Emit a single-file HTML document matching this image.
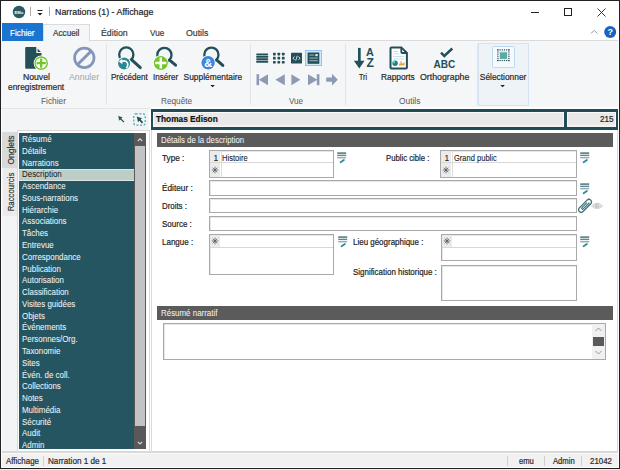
<!DOCTYPE html>
<html><head><meta charset="utf-8"><style>
html,body{margin:0;padding:0;}
body{width:620px;height:470px;overflow:hidden;position:relative;background:#fff;font-family:'Liberation Sans', sans-serif;}
</style></head><body>
<svg style="position:absolute;left:12px;top:5px;" width="14" height="14" viewBox="0 0 14 14"><circle cx="7" cy="7" r="6.2" fill="#2b5a62"/><text x="7" y="8.6" font-family="Liberation Sans" font-size="4.2" fill="#fff" text-anchor="middle" font-weight="bold">EMu</text></svg>
<div style="position:absolute;left:30.2px;top:7.3px;width:1.00px;height:8.30px;background:#ababab"></div>
<svg style="position:absolute;left:36px;top:8px;" width="8" height="9" viewBox="0 0 8 9"><rect x="1.5" y="2" width="5" height="1" fill="#222"/><path d="M1.5 5 L6.5 5 L4 7.5 Z" fill="#222"/></svg>
<div style="position:absolute;left:48.5px;top:7.3px;width:1.00px;height:8.30px;background:#ababab"></div>
<div style="position:absolute;left:55.30px;top:8px;font:normal 8.7px/1 'Liberation Sans', sans-serif;color:#1e1e1e;white-space:pre;letter-spacing:0px;transform:scaleX(1.0198);transform-origin:0 0;-webkit-text-stroke:0.2px #1e1e1e;">Narrations (1) - Affichage</div>
<div style="position:absolute;left:530.5px;top:11.5px;width:8.00px;height:1.00px;background:#222"></div>
<div style="position:absolute;left:563.5px;top:8px;width:8.10px;height:7.80px;border:1px solid #222;box-sizing:border-box"></div>
<svg style="position:absolute;left:597px;top:8px;" width="9" height="9" viewBox="0 0 9 9"><path d="M0.5 0.5 L8.5 8.5 M8.5 0.5 L0.5 8.5" stroke="#2a2a2a" stroke-width="0.95"/></svg>
<div style="position:absolute;left:2px;top:23.3px;width:41.00px;height:17.70px;background:#1b74cf"></div>
<div style="position:absolute;left:9.70px;top:29px;font:normal 8.9px/1 'Liberation Sans', sans-serif;color:#fff;white-space:pre;letter-spacing:0px;transform:scaleX(0.9222);transform-origin:0 0;-webkit-text-stroke:0.2px #fff;">Fichier</div>
<div style="position:absolute;left:90px;top:40px;width:528.00px;height:1.00px;background:#dadbdc"></div>
<div style="position:absolute;left:42.6px;top:23.6px;width:47.40px;height:17.40px;background:#f5f6f7;border:1px solid #dadbdc;border-bottom:none;box-sizing:border-box"></div>
<div style="position:absolute;left:52.90px;top:29px;font:normal 8.9px/1 'Liberation Sans', sans-serif;color:#3a3a3a;white-space:pre;letter-spacing:0px;transform:scaleX(0.9241);transform-origin:0 0;-webkit-text-stroke:0.2px #3a3a3a;">Accueil</div>
<div style="position:absolute;left:101.00px;top:29px;font:normal 8.9px/1 'Liberation Sans', sans-serif;color:#3a3a3a;white-space:pre;letter-spacing:0px;transform:scaleX(0.9852);transform-origin:0 0;-webkit-text-stroke:0.2px #3a3a3a;">Édition</div>
<div style="position:absolute;left:149.70px;top:29px;font:normal 8.9px/1 'Liberation Sans', sans-serif;color:#3a3a3a;white-space:pre;letter-spacing:0px;transform:scaleX(0.9188);transform-origin:0 0;-webkit-text-stroke:0.2px #3a3a3a;">Vue</div>
<div style="position:absolute;left:186.00px;top:29px;font:normal 8.9px/1 'Liberation Sans', sans-serif;color:#3a3a3a;white-space:pre;letter-spacing:0px;transform:scaleX(0.9870);transform-origin:0 0;-webkit-text-stroke:0.2px #3a3a3a;">Outils</div>
<svg style="position:absolute;left:590px;top:29px;" width="9" height="6" viewBox="0 0 9 6"><path d="M1 4.5 L4.2 1.3 L7.4 4.5" stroke="#9a9a9a" stroke-width="1" fill="none"/></svg>
<svg style="position:absolute;left:603px;top:24.5px;" width="15" height="15" viewBox="0 0 15 15"><circle cx="7.2" cy="7" r="6" fill="#1565c0"/><text x="7.2" y="10.3" font-family="Liberation Sans" font-size="9" font-weight="bold" fill="#fff" text-anchor="middle">?</text></svg>
<div style="position:absolute;left:1px;top:41px;width:617.00px;height:67.00px;background:#f5f6f7"></div>
<div style="position:absolute;left:1px;top:107.6px;width:150.00px;height:1.40px;background:#f3f4f6"></div>
<div style="position:absolute;left:1px;top:107.6px;width:150.00px;height:1.00px;background:#e4e5e7"></div>
<div style="position:absolute;left:151px;top:106.9px;width:467.00px;height:2.10px;background:#fdfdfd"></div>
<div style="position:absolute;left:105.5px;top:44px;width:1.00px;height:61.00px;background:#e1e3e6"></div>
<div style="position:absolute;left:249.5px;top:44px;width:1.00px;height:61.00px;background:#e1e3e6"></div>
<div style="position:absolute;left:345px;top:44px;width:1.00px;height:61.00px;background:#e1e3e6"></div>
<div style="position:absolute;left:476.5px;top:44px;width:1.00px;height:61.00px;background:#e1e3e6"></div>
<div style="position:absolute;left:41.00px;top:97px;font:normal 8.4px/1 'Liberation Sans', sans-serif;color:#5e5e5e;white-space:pre;letter-spacing:0px;transform:scaleX(0.9920);transform-origin:0 0;-webkit-text-stroke:0.05px #5e5e5e;">Fichier</div>
<div style="position:absolute;left:161.00px;top:97px;font:normal 8.4px/1 'Liberation Sans', sans-serif;color:#5e5e5e;white-space:pre;letter-spacing:0px;transform:scaleX(0.9844);transform-origin:0 0;-webkit-text-stroke:0.05px #5e5e5e;">Requête</div>
<div style="position:absolute;left:289.20px;top:97px;font:normal 8.4px/1 'Liberation Sans', sans-serif;color:#5e5e5e;white-space:pre;letter-spacing:0px;transform:scaleX(0.9667);transform-origin:0 0;-webkit-text-stroke:0.05px #5e5e5e;">Vue</div>
<div style="position:absolute;left:399.00px;top:97px;font:normal 8.4px/1 'Liberation Sans', sans-serif;color:#5e5e5e;white-space:pre;letter-spacing:0px;-webkit-text-stroke:0.05px #5e5e5e;">Outils</div>
<div style="position:absolute;left:23.00px;top:73px;font:normal 8.4px/1 'Liberation Sans', sans-serif;color:#2a2a2a;white-space:pre;letter-spacing:0px;transform:scaleX(1.0308);transform-origin:0 0;-webkit-text-stroke:0.2px #2a2a2a;">Nouvel</div>
<div style="position:absolute;left:8.00px;top:83px;font:normal 8.4px/1 'Liberation Sans', sans-serif;color:#2a2a2a;white-space:pre;letter-spacing:0px;transform:scaleX(1.0054);transform-origin:0 0;-webkit-text-stroke:0.2px #2a2a2a;">enregistrement</div>
<div style="position:absolute;left:68.70px;top:73px;font:normal 8.4px/1 'Liberation Sans', sans-serif;color:#a8a8a8;white-space:pre;letter-spacing:0px;transform:scaleX(1.0414);transform-origin:0 0;-webkit-text-stroke:0.05px #a8a8a8;">Annuler</div>
<div style="position:absolute;left:111.20px;top:73px;font:normal 8.4px/1 'Liberation Sans', sans-serif;color:#2a2a2a;white-space:pre;letter-spacing:0px;transform:scaleX(0.9605);transform-origin:0 0;-webkit-text-stroke:0.2px #2a2a2a;">Précédent</div>
<div style="position:absolute;left:152.90px;top:73px;font:normal 8.4px/1 'Liberation Sans', sans-serif;color:#2a2a2a;white-space:pre;letter-spacing:0px;transform:scaleX(0.9654);transform-origin:0 0;-webkit-text-stroke:0.2px #2a2a2a;">Insérer</div>
<div style="position:absolute;left:183.60px;top:73px;font:normal 8.4px/1 'Liberation Sans', sans-serif;color:#2a2a2a;white-space:pre;letter-spacing:0px;-webkit-text-stroke:0.2px #2a2a2a;">Supplémentaire</div>
<div style="position:absolute;left:359.00px;top:73px;font:normal 8.4px/1 'Liberation Sans', sans-serif;color:#2a2a2a;white-space:pre;letter-spacing:0px;transform:scaleX(0.8400);transform-origin:0 0;-webkit-text-stroke:0.2px #2a2a2a;">Tri</div>
<div style="position:absolute;left:381.00px;top:73px;font:normal 8.4px/1 'Liberation Sans', sans-serif;color:#2a2a2a;white-space:pre;letter-spacing:0px;transform:scaleX(0.9941);transform-origin:0 0;-webkit-text-stroke:0.2px #2a2a2a;">Rapports</div>
<div style="position:absolute;left:419.90px;top:73px;font:normal 8.4px/1 'Liberation Sans', sans-serif;color:#2a2a2a;white-space:pre;letter-spacing:0px;transform:scaleX(1.0489);transform-origin:0 0;-webkit-text-stroke:0.2px #2a2a2a;">Orthographe</div>
<div style="position:absolute;left:478.2px;top:42.7px;width:50.80px;height:63.70px;background:#eef3f8;border:1px solid #d3e4f5;box-sizing:border-box"></div>
<div style="position:absolute;left:492px;top:46.1px;width:22.80px;height:22.40px;background:#f7fafd;border:1.4px solid #bcd8f5;border-radius:1.5px;box-sizing:border-box"></div>
<div style="position:absolute;left:479.80px;top:73px;font:normal 8.4px/1 'Liberation Sans', sans-serif;color:#2a2a2a;white-space:pre;letter-spacing:0px;-webkit-text-stroke:0.2px #2a2a2a;">Sélectionner</div>
<svg style="position:absolute;left:209px;top:84px;" width="8" height="5" viewBox="0 0 8 5"><path d="M1.3 0.9 L5.9 0.9 L3.6 3.3 Z" fill="#222"/></svg>
<svg style="position:absolute;left:499px;top:84px;" width="8" height="5" viewBox="0 0 8 5"><path d="M1.3 0.9 L5.9 0.9 L3.6 3.3 Z" fill="#222"/></svg>
<svg style="position:absolute;left:0;top:0" width="620" height="470" viewBox="0 0 620 470"><path d="M26.2 47 H36.3 V53 H41.5 V67.7 a1 1 0 0 1 -1 1 H26.2 a1 1 0 0 1 -1 -1 V48 a1 1 0 0 1 1 -1 Z" fill="#234f58"/><path d="M37.6 48.6 L40.9 52 H37.6 Z" fill="#234f58"/><circle cx="41.2" cy="63.1" r="7.6" fill="#fff"/><circle cx="41.2" cy="63.1" r="6.1" fill="#fff" stroke="#72c62a" stroke-width="1.4"/><path d="M41.2 58.5 V67.7 M36.6 63.1 H45.8" stroke="#72c62a" stroke-width="2.3"/></svg>
<svg style="position:absolute;left:0;top:0" width="620" height="470" viewBox="0 0 620 470"><circle cx="84.3" cy="57.9" r="9.7" fill="none" stroke="#8396ba" stroke-width="2.7"/><path d="M77.4 64.8 L91.2 51" stroke="#8396ba" stroke-width="3"/></svg>
<svg style="position:absolute;left:0;top:0" width="620" height="470" viewBox="0 0 620 470"><circle cx="126.3" cy="54.5" r="7.1" fill="none" stroke="#234f58" stroke-width="2.3"/><path d="M131.5 59.7 L140.3 67.6" stroke="#234f58" stroke-width="3" stroke-linecap="round"/><circle cx="124.1" cy="63.5" r="6.9" fill="#fff"/><circle cx="124.1" cy="63.5" r="6" fill="#2a8a92"/><path d="M121 61.6 Q126 59.6 127.6 63.2 Q128.4 66 126.2 68" stroke="#fff" stroke-width="1.6" fill="none"/><path d="M118.8 61.6 L122.2 58.8 L122.4 64.2 Z" fill="#fff"/></svg>
<svg style="position:absolute;left:0;top:0" width="620" height="470" viewBox="0 0 620 470"><circle cx="164.4" cy="54.9" r="7.1" fill="none" stroke="#234f58" stroke-width="2.3"/><path d="M169.6 60.1 L175.6 65.2" stroke="#234f58" stroke-width="3" stroke-linecap="round"/><circle cx="160.8" cy="63.1" r="7.8" fill="#fff"/><circle cx="160.8" cy="63.1" r="7" fill="#72c62a"/><path d="M160.8 57.6 V68.6 M155.3 63.1 H166.3" stroke="#fff" stroke-width="2.5"/></svg>
<svg style="position:absolute;left:0;top:0" width="620" height="470" viewBox="0 0 620 470"><circle cx="211.4" cy="54.7" r="7.1" fill="none" stroke="#234f58" stroke-width="2.3"/><path d="M216.6 59.900000000000006 L222.8 65.4" stroke="#234f58" stroke-width="3" stroke-linecap="round"/><circle cx="208.1" cy="62.8" r="7.6" fill="#fff"/><circle cx="208.1" cy="62.8" r="6.7" fill="#3b86de"/><text x="208.3" y="66.6" font-family="Liberation Sans" font-size="11" font-weight="bold" fill="#fff" text-anchor="middle">&amp;</text></svg>
<svg style="position:absolute;left:0;top:0" width="620" height="470" viewBox="0 0 620 470"><rect x="256.3" y="53.40" width="11.8" height="1.9" rx="0.5" fill="#234f58"/><rect x="256.3" y="55.85" width="11.8" height="1.9" rx="0.5" fill="#234f58"/><rect x="256.3" y="58.30" width="11.8" height="1.9" rx="0.5" fill="#234f58"/><rect x="256.3" y="60.75" width="11.8" height="1.9" rx="0.5" fill="#234f58"/><rect x="273.00" y="52.70" width="2.7" height="2.7" rx="0.6" fill="#234f58"/><rect x="273.00" y="56.80" width="2.7" height="2.7" rx="0.6" fill="#234f58"/><rect x="273.00" y="60.90" width="2.7" height="2.7" rx="0.6" fill="#234f58"/><rect x="277.45" y="52.70" width="2.7" height="2.7" rx="0.6" fill="#234f58"/><rect x="277.45" y="56.80" width="2.7" height="2.7" rx="0.6" fill="#234f58"/><rect x="277.45" y="60.90" width="2.7" height="2.7" rx="0.6" fill="#234f58"/><rect x="281.90" y="52.70" width="2.7" height="2.7" rx="0.6" fill="#234f58"/><rect x="281.90" y="56.80" width="2.7" height="2.7" rx="0.6" fill="#234f58"/><rect x="281.90" y="60.90" width="2.7" height="2.7" rx="0.6" fill="#234f58"/><rect x="291" y="52.7" width="11" height="10.9" rx="0.6" fill="#234f58"/><path d="M294.4 56.5 L293 58.2 L294.4 59.9 M298.6 56.5 L300 58.2 L298.6 59.9 M297.3 55.8 L295.7 60.6" stroke="#fff" stroke-width="0.8" fill="none"/></svg>
<div style="position:absolute;left:305.4px;top:50px;width:16.70px;height:16.00px;background:#d2e7f9;border:1px solid #90c3ef;box-sizing:border-box"></div>
<svg style="position:absolute;left:0;top:0" width="620" height="470" viewBox="0 0 620 470"><rect x="307.6" y="52.5" width="11.7" height="11.3" fill="#234f58"/><rect x="309.4" y="54.6" width="4.8" height="0.9" fill="#a9c6cf"/><rect x="315.2" y="54" width="2.6" height="2.3" rx="0.8" fill="#d8e6ea"/><rect x="309.4" y="57.6" width="8.4" height="0.9" fill="#a9c6cf"/><rect x="309.4" y="60.3" width="8.4" height="0.9" fill="#a9c6cf"/></svg>
<svg style="position:absolute;left:0;top:0" width="620" height="470" viewBox="0 0 620 470"><rect x="256.5" y="74.2" width="2.6" height="11" fill="#8d9ab5"/><path d="M258.8 79.7 L268 74.2 L268 85.2 Z" fill="#8d9ab5"/><path d="M275.4 79.7 L284.8 74.2 L284.8 85.2 Z" fill="#8d9ab5"/><path d="M291.4 74.2 L300.4 79.7 L291.4 85.2 Z" fill="#8d9ab5"/><path d="M308 74.2 L317.4 79.7 L308 85.2 Z" fill="#8d9ab5"/><rect x="316.8" y="74.2" width="2.6" height="11" fill="#8d9ab5"/><path d="M326.2 77.6 L332 77.6 L332 73.8 L337.8 79.7 L332 85.6 L332 81.8 L326.2 81.8 Z" fill="#8d9ab5"/></svg>
<svg style="position:absolute;left:0;top:0" width="620" height="470" viewBox="0 0 620 470"><rect x="358" y="47.9" width="2.7" height="13.5" fill="#234f58"/><path d="M353.9 60.7 L364.5 60.7 L359.3 68.4 Z" fill="#234f58"/><text x="366" y="56.2" font-family="Liberation Sans" font-size="11.8" font-weight="bold" fill="#234f58" textLength="7.8" lengthAdjust="spacingAndGlyphs">A</text><text x="366.4" y="66.9" font-family="Liberation Sans" font-size="12.2" font-weight="bold" fill="#234f58" textLength="7.4" lengthAdjust="spacingAndGlyphs">Z</text></svg>
<svg style="position:absolute;left:0;top:0" width="620" height="470" viewBox="0 0 620 470"><path d="M391.5 47.4 H401.3 L406.9 53 V67.6 a1 1 0 0 1 -1 1 H391.5 a1 1 0 0 1 -1 -1 V48.4 a1 1 0 0 1 1 -1 Z" fill="#fff" stroke="#234f58" stroke-width="2"/><path d="M401.3 47.6 V52 a1 1 0 0 0 1 1 H406.7" fill="none" stroke="#234f58" stroke-width="1.8"/><rect x="393.2" y="51" width="5" height="0.9" fill="#c3daee"/><rect x="393.2" y="53.4" width="6" height="0.9" fill="#c3daee"/><rect x="393.2" y="56" width="11" height="0.9" fill="#c3daee"/><rect x="393.2" y="58.5" width="11" height="0.9" fill="#c3daee"/><circle cx="395.1" cy="63.3" r="2.7" fill="#1f7f84"/><path d="M395.1 63.3 V60.6 A2.7 2.7 0 0 0 392.4 63.3 Z" fill="#4cd0c0"/><path d="M399 65.6 V63.6 H400.4 V61.3 H401.8 V63.6 H403.2 V62.5 H404.6 V65.6 Z" fill="#e9a63e"/></svg>
<svg style="position:absolute;left:0;top:0" width="620" height="470" viewBox="0 0 620 470"><path d="M441 52.6 L444.3 56 L452.3 48.5" stroke="#234f58" stroke-width="2.4" fill="none"/><text x="433.4" y="68.1" font-family="Liberation Sans" font-size="11.4" font-weight="bold" fill="#234f58" textLength="21.8" lengthAdjust="spacingAndGlyphs">ABC</text></svg>
<svg style="position:absolute;left:0;top:0" width="620" height="470" viewBox="0 0 620 470"><rect x="497.30" y="49.3" width="1.2" height="1.2" fill="#2a4f58"/><rect x="497.30" y="59.9" width="1.2" height="1.2" fill="#2a4f58"/><rect x="499.50" y="49.3" width="1.2" height="1.2" fill="#2a4f58"/><rect x="499.50" y="59.9" width="1.2" height="1.2" fill="#2a4f58"/><rect x="501.70" y="49.3" width="1.2" height="1.2" fill="#2a4f58"/><rect x="501.70" y="59.9" width="1.2" height="1.2" fill="#2a4f58"/><rect x="503.90" y="49.3" width="1.2" height="1.2" fill="#2a4f58"/><rect x="503.90" y="59.9" width="1.2" height="1.2" fill="#2a4f58"/><rect x="506.10" y="49.3" width="1.2" height="1.2" fill="#2a4f58"/><rect x="506.10" y="59.9" width="1.2" height="1.2" fill="#2a4f58"/><rect x="508.30" y="49.3" width="1.2" height="1.2" fill="#2a4f58"/><rect x="508.30" y="59.9" width="1.2" height="1.2" fill="#2a4f58"/><rect x="497.3" y="49.30" width="1.2" height="1.2" fill="#2a4f58"/><rect x="508.3" y="49.30" width="1.2" height="1.2" fill="#2a4f58"/><rect x="497.3" y="51.42" width="1.2" height="1.2" fill="#2a4f58"/><rect x="508.3" y="51.42" width="1.2" height="1.2" fill="#2a4f58"/><rect x="497.3" y="53.54" width="1.2" height="1.2" fill="#2a4f58"/><rect x="508.3" y="53.54" width="1.2" height="1.2" fill="#2a4f58"/><rect x="497.3" y="55.66" width="1.2" height="1.2" fill="#2a4f58"/><rect x="508.3" y="55.66" width="1.2" height="1.2" fill="#2a4f58"/><rect x="497.3" y="57.78" width="1.2" height="1.2" fill="#2a4f58"/><rect x="508.3" y="57.78" width="1.2" height="1.2" fill="#2a4f58"/><rect x="497.3" y="59.90" width="1.2" height="1.2" fill="#2a4f58"/><rect x="508.3" y="59.90" width="1.2" height="1.2" fill="#2a4f58"/><rect x="499.8" y="51.9" width="7.3" height="7" fill="#5aa9a6"/><rect x="499.8" y="51.9" width="7.3" height="1.2" fill="#7cc0bc"/></svg>
<div style="position:absolute;left:1px;top:109px;width:148.00px;height:21.00px;background:#f3f4f6"></div>
<svg style="position:absolute;left:115px;top:113px;" width="12" height="12" viewBox="0 0 12 12"><path d="M2.8 2.4 L8 4.2 L6.6 5.6 L9.6 8.6 L8.4 9.8 L5.4 6.8 L4 8.2 Z" fill="#234f58" stroke="#fff" stroke-width="0.6"/></svg>
<svg style="position:absolute;left:132px;top:112px;" width="15" height="15" viewBox="0 0 15 15"><rect x="1.8" y="1.8" width="11.4" height="11.4" rx="2" fill="none" stroke="#4ea6a8" stroke-width="1.2" stroke-dasharray="2 1.6"/><path d="M4.8 4.4 L10 6.2 L8.6 7.6 L11.2 10.2 L10 11.4 L7.4 8.8 L6 10.2 Z" fill="#234f58"/></svg>
<div style="position:absolute;left:1px;top:130px;width:16.00px;height:323.00px;background:#f3f4f6"></div>
<div style="position:absolute;left:2px;top:132px;width:14.50px;height:36.30px;background:#d9d9d9"></div>
<div style="position:absolute;left:2.5px;top:168.3px;width:14.10px;height:47.70px;background:#ebebeb"></div>
<div style="position:absolute;left:10.9px;top:149.5px;width:0;height:0"><div style="position:absolute;left:0;top:0;transform:translate(-50%,-50%) rotate(-90deg) scaleX(0.97);font:8.7px/1 'Liberation Sans', sans-serif;color:#2a2a2a;white-space:pre;-webkit-text-stroke:0.15px #2a2a2a">Onglets</div></div>
<div style="position:absolute;left:10.9px;top:191.8px;width:0;height:0"><div style="position:absolute;left:0;top:0;transform:translate(-50%,-50%) rotate(-90deg) scaleX(0.9);font:8.7px/1 'Liberation Sans', sans-serif;color:#2a2a2a;white-space:pre;-webkit-text-stroke:0.15px #2a2a2a">Raccourcis</div></div>
<div style="position:absolute;left:16.5px;top:130px;width:133.00px;height:321.20px;background:#fff;border:1px solid #d9d9d9;border-bottom:none;box-sizing:border-box"></div>
<div style="position:absolute;left:19px;top:133px;width:115.00px;height:315.60px;background:#265562"></div>
<div style="position:absolute;left:22.00px;top:136px;font:normal 8.2px/1 'Liberation Sans', sans-serif;color:#f2f2f2;white-space:pre;letter-spacing:0px;transform:scaleX(0.9700);transform-origin:0 0;-webkit-text-stroke:0.05px #f2f2f2;">Résumé</div>
<div style="position:absolute;left:22.00px;top:148px;font:normal 8.2px/1 'Liberation Sans', sans-serif;color:#f2f2f2;white-space:pre;letter-spacing:0px;transform:scaleX(0.9700);transform-origin:0 0;-webkit-text-stroke:0.05px #f2f2f2;">Détails</div>
<div style="position:absolute;left:22.00px;top:160px;font:normal 8.2px/1 'Liberation Sans', sans-serif;color:#f2f2f2;white-space:pre;letter-spacing:0px;transform:scaleX(0.9700);transform-origin:0 0;-webkit-text-stroke:0.05px #f2f2f2;">Narrations</div>
<div style="position:absolute;left:19px;top:168.61px;width:115.00px;height:11.97px;background:#bdcdc8;border-top:1px solid #dbe6e2;border-bottom:1px solid #dbe6e2;box-sizing:border-box"></div>
<div style="position:absolute;left:22.00px;top:171px;font:normal 8.2px/1 'Liberation Sans', sans-serif;color:#1e1e1e;white-space:pre;letter-spacing:0px;transform:scaleX(0.9700);transform-origin:0 0;-webkit-text-stroke:0.05px #1e1e1e;">Description</div>
<div style="position:absolute;left:22.00px;top:183px;font:normal 8.2px/1 'Liberation Sans', sans-serif;color:#f2f2f2;white-space:pre;letter-spacing:0px;transform:scaleX(0.9700);transform-origin:0 0;-webkit-text-stroke:0.05px #f2f2f2;">Ascendance</div>
<div style="position:absolute;left:22.00px;top:195px;font:normal 8.2px/1 'Liberation Sans', sans-serif;color:#f2f2f2;white-space:pre;letter-spacing:0px;transform:scaleX(0.9700);transform-origin:0 0;-webkit-text-stroke:0.05px #f2f2f2;">Sous-narrations</div>
<div style="position:absolute;left:22.00px;top:207px;font:normal 8.2px/1 'Liberation Sans', sans-serif;color:#f2f2f2;white-space:pre;letter-spacing:0px;transform:scaleX(0.9700);transform-origin:0 0;-webkit-text-stroke:0.05px #f2f2f2;">Hiérarchie</div>
<div style="position:absolute;left:22.00px;top:218px;font:normal 8.2px/1 'Liberation Sans', sans-serif;color:#f2f2f2;white-space:pre;letter-spacing:0px;transform:scaleX(0.9700);transform-origin:0 0;-webkit-text-stroke:0.05px #f2f2f2;">Associations</div>
<div style="position:absolute;left:22.00px;top:230px;font:normal 8.2px/1 'Liberation Sans', sans-serif;color:#f2f2f2;white-space:pre;letter-spacing:0px;transform:scaleX(0.9700);transform-origin:0 0;-webkit-text-stroke:0.05px #f2f2f2;">Tâches</div>
<div style="position:absolute;left:22.00px;top:242px;font:normal 8.2px/1 'Liberation Sans', sans-serif;color:#f2f2f2;white-space:pre;letter-spacing:0px;transform:scaleX(0.9700);transform-origin:0 0;-webkit-text-stroke:0.05px #f2f2f2;">Entrevue</div>
<div style="position:absolute;left:22.00px;top:254px;font:normal 8.2px/1 'Liberation Sans', sans-serif;color:#f2f2f2;white-space:pre;letter-spacing:0px;transform:scaleX(0.9700);transform-origin:0 0;-webkit-text-stroke:0.05px #f2f2f2;">Correspondance</div>
<div style="position:absolute;left:22.00px;top:266px;font:normal 8.2px/1 'Liberation Sans', sans-serif;color:#f2f2f2;white-space:pre;letter-spacing:0px;transform:scaleX(0.9700);transform-origin:0 0;-webkit-text-stroke:0.05px #f2f2f2;">Publication</div>
<div style="position:absolute;left:22.00px;top:277px;font:normal 8.2px/1 'Liberation Sans', sans-serif;color:#f2f2f2;white-space:pre;letter-spacing:0px;transform:scaleX(0.9700);transform-origin:0 0;-webkit-text-stroke:0.05px #f2f2f2;">Autorisation</div>
<div style="position:absolute;left:22.00px;top:289px;font:normal 8.2px/1 'Liberation Sans', sans-serif;color:#f2f2f2;white-space:pre;letter-spacing:0px;transform:scaleX(0.9700);transform-origin:0 0;-webkit-text-stroke:0.05px #f2f2f2;">Classification</div>
<div style="position:absolute;left:22.00px;top:301px;font:normal 8.2px/1 'Liberation Sans', sans-serif;color:#f2f2f2;white-space:pre;letter-spacing:0px;transform:scaleX(0.9700);transform-origin:0 0;-webkit-text-stroke:0.05px #f2f2f2;">Visites guidées</div>
<div style="position:absolute;left:22.00px;top:313px;font:normal 8.2px/1 'Liberation Sans', sans-serif;color:#f2f2f2;white-space:pre;letter-spacing:0px;transform:scaleX(0.9700);transform-origin:0 0;-webkit-text-stroke:0.05px #f2f2f2;">Objets</div>
<div style="position:absolute;left:22.00px;top:324px;font:normal 8.2px/1 'Liberation Sans', sans-serif;color:#f2f2f2;white-space:pre;letter-spacing:0px;transform:scaleX(0.9700);transform-origin:0 0;-webkit-text-stroke:0.05px #f2f2f2;">Événements</div>
<div style="position:absolute;left:22.00px;top:336px;font:normal 8.2px/1 'Liberation Sans', sans-serif;color:#f2f2f2;white-space:pre;letter-spacing:0px;transform:scaleX(0.9700);transform-origin:0 0;-webkit-text-stroke:0.05px #f2f2f2;">Personnes/Org.</div>
<div style="position:absolute;left:22.00px;top:348px;font:normal 8.2px/1 'Liberation Sans', sans-serif;color:#f2f2f2;white-space:pre;letter-spacing:0px;transform:scaleX(0.9700);transform-origin:0 0;-webkit-text-stroke:0.05px #f2f2f2;">Taxonomie</div>
<div style="position:absolute;left:22.00px;top:360px;font:normal 8.2px/1 'Liberation Sans', sans-serif;color:#f2f2f2;white-space:pre;letter-spacing:0px;transform:scaleX(0.9700);transform-origin:0 0;-webkit-text-stroke:0.05px #f2f2f2;">Sites</div>
<div style="position:absolute;left:22.00px;top:372px;font:normal 8.2px/1 'Liberation Sans', sans-serif;color:#f2f2f2;white-space:pre;letter-spacing:0px;transform:scaleX(0.9700);transform-origin:0 0;-webkit-text-stroke:0.05px #f2f2f2;">Évén. de coll.</div>
<div style="position:absolute;left:22.00px;top:383px;font:normal 8.2px/1 'Liberation Sans', sans-serif;color:#f2f2f2;white-space:pre;letter-spacing:0px;transform:scaleX(0.9700);transform-origin:0 0;-webkit-text-stroke:0.05px #f2f2f2;">Collections</div>
<div style="position:absolute;left:22.00px;top:395px;font:normal 8.2px/1 'Liberation Sans', sans-serif;color:#f2f2f2;white-space:pre;letter-spacing:0px;transform:scaleX(0.9700);transform-origin:0 0;-webkit-text-stroke:0.05px #f2f2f2;">Notes</div>
<div style="position:absolute;left:22.00px;top:407px;font:normal 8.2px/1 'Liberation Sans', sans-serif;color:#f2f2f2;white-space:pre;letter-spacing:0px;transform:scaleX(0.9700);transform-origin:0 0;-webkit-text-stroke:0.05px #f2f2f2;">Multimédia</div>
<div style="position:absolute;left:22.00px;top:419px;font:normal 8.2px/1 'Liberation Sans', sans-serif;color:#f2f2f2;white-space:pre;letter-spacing:0px;transform:scaleX(0.9700);transform-origin:0 0;-webkit-text-stroke:0.05px #f2f2f2;">Sécurité</div>
<div style="position:absolute;left:22.00px;top:430px;font:normal 8.2px/1 'Liberation Sans', sans-serif;color:#f2f2f2;white-space:pre;letter-spacing:0px;transform:scaleX(0.9700);transform-origin:0 0;-webkit-text-stroke:0.05px #f2f2f2;">Audit</div>
<div style="position:absolute;left:22.00px;top:442px;font:normal 8.2px/1 'Liberation Sans', sans-serif;color:#f2f2f2;white-space:pre;letter-spacing:0px;transform:scaleX(0.9700);transform-origin:0 0;-webkit-text-stroke:0.05px #f2f2f2;">Admin</div>
<div style="position:absolute;left:134px;top:133.3px;width:11.80px;height:315.30px;background:#595959"></div>
<div style="position:absolute;left:135px;top:146px;width:9.80px;height:279.50px;background:#c3c3c3"></div>
<svg style="position:absolute;left:136px;top:137px;" width="8" height="6" viewBox="0 0 8 6"><path d="M1.8 4 L4 1.8 L6.2 4" stroke="#d8d8d8" stroke-width="1.1" fill="none"/></svg>
<svg style="position:absolute;left:136px;top:440px;" width="8" height="6" viewBox="0 0 8 6"><path d="M1.8 1.8 L4 4 L6.2 1.8" stroke="#d8d8d8" stroke-width="1.1" fill="none"/></svg>
<div style="position:absolute;left:150.5px;top:130px;width:467.50px;height:321.20px;background:#fff;border-left:1px solid #d9d9d9;border-right:1px solid #d9d9d9;box-sizing:border-box"></div>
<div style="position:absolute;left:151.2px;top:108.9px;width:466.80px;height:21.30px;background:#1f4d57"></div>
<div style="position:absolute;left:153.4px;top:112.3px;width:410.50px;height:14.70px;background:#e9e9e9;border:1.5px solid #fbfbfb;border-bottom:2px solid #f3f3f3;box-sizing:border-box"></div>
<div style="position:absolute;left:566.5px;top:112.3px;width:49.60px;height:14.70px;background:#e9e9e9;border:1.5px solid #fbfbfb;border-bottom:2px solid #f3f3f3;box-sizing:border-box"></div>
<div style="position:absolute;left:156.00px;top:115px;font:bold 8.6px/1 'Liberation Sans', sans-serif;color:#111;white-space:pre;letter-spacing:0px;transform:scaleX(0.9641);transform-origin:0 0;-webkit-text-stroke:0.2px #111;">Thomas Edison</div>
<div style="position:absolute;left:599.90px;top:115px;font:normal 8.6px/1 'Liberation Sans', sans-serif;color:#222;white-space:pre;letter-spacing:0px;transform:scaleX(0.9357);transform-origin:0 0;-webkit-text-stroke:0.2px #222;">215</div>
<div style="position:absolute;left:156.8px;top:133.3px;width:456.20px;height:13.50px;background:#5b5b5b"></div>
<div style="position:absolute;left:161.30px;top:136px;font:normal 8.6px/1 'Liberation Sans', sans-serif;color:#f2f2f2;white-space:pre;letter-spacing:0px;transform:scaleX(0.9110);transform-origin:0 0;-webkit-text-stroke:0.05px #f2f2f2;">Détails de la description</div>
<div style="position:absolute;left:161.60px;top:154px;font:normal 8.8px/1 'Liberation Sans', sans-serif;color:#222;white-space:pre;letter-spacing:0px;transform:scaleX(0.9292);transform-origin:0 0;-webkit-text-stroke:0.2px #222;">Type :</div>
<div style="position:absolute;left:209.3px;top:149.5px;width:124.70px;height:28.00px;background:#fff;border:1px solid #a9a9a9;box-shadow:inset 1px 1px 0 #e6e6e6;box-sizing:border-box"></div>
<div style="position:absolute;left:210.3px;top:150.5px;width:10.20px;height:26.00px;background:#ebebeb"></div>
<div style="position:absolute;left:210.3px;top:162.4px;width:122.70px;height:1.00px;background:#d8d8d8"></div>
<div style="position:absolute;left:220.5px;top:150.5px;width:0.80px;height:26.00px;background:#dedede"></div>
<div style="position:absolute;left:213.40px;top:154px;font:normal 8.4px/1 'Liberation Sans', sans-serif;color:#222;white-space:pre;letter-spacing:0px;-webkit-text-stroke:0.1px #222;">1</div>
<div style="position:absolute;left:221.80px;top:154px;font:normal 8.4px/1 'Liberation Sans', sans-serif;color:#222;white-space:pre;letter-spacing:0px;transform:scaleX(0.9034);transform-origin:0 0;-webkit-text-stroke:0.1px #222;">Histoire</div>
<svg style="position:absolute;left:210.9px;top:166.4px;" width="8" height="8" viewBox="0 0 8 8"><path d="M4 0.7 V7.3 M0.7 4 H7.3 M1.7 1.7 L6.3 6.3 M6.3 1.7 L1.7 6.3" stroke="#5a5a5a" stroke-width="0.8"/></svg>
<svg style="position:absolute;left:337.4px;top:151.5px;" width="11" height="12" viewBox="0 0 11 12"><rect x="0.2" y="0.4" width="9" height="1.4" fill="#3e6d77"/><rect x="0.2" y="2.7" width="9" height="1.4" fill="#5d8690"/><rect x="0.2" y="5" width="9" height="1.4" fill="#93aeb3"/><path d="M3.6 10.3 L6.9 8" stroke="#2d8d98" stroke-width="1.8" stroke-linecap="round"/></svg>
<div style="position:absolute;left:386.00px;top:154px;font:normal 8.8px/1 'Liberation Sans', sans-serif;color:#222;white-space:pre;letter-spacing:0px;transform:scaleX(0.8776);transform-origin:0 0;-webkit-text-stroke:0.2px #222;">Public cible :</div>
<div style="position:absolute;left:440.3px;top:149.5px;width:136.70px;height:28.00px;background:#fff;border:1px solid #a9a9a9;box-shadow:inset 1px 1px 0 #e6e6e6;box-sizing:border-box"></div>
<div style="position:absolute;left:441.3px;top:150.5px;width:10.20px;height:26.00px;background:#ebebeb"></div>
<div style="position:absolute;left:441.3px;top:162.4px;width:134.70px;height:1.00px;background:#d8d8d8"></div>
<div style="position:absolute;left:451.5px;top:150.5px;width:0.80px;height:26.00px;background:#dedede"></div>
<div style="position:absolute;left:444.40px;top:154px;font:normal 8.4px/1 'Liberation Sans', sans-serif;color:#222;white-space:pre;letter-spacing:0px;-webkit-text-stroke:0.1px #222;">1</div>
<div style="position:absolute;left:453.70px;top:154px;font:normal 8.4px/1 'Liberation Sans', sans-serif;color:#222;white-space:pre;letter-spacing:0px;transform:scaleX(0.9000);transform-origin:0 0;-webkit-text-stroke:0.1px #222;">Grand public</div>
<svg style="position:absolute;left:442px;top:166.4px;" width="8" height="8" viewBox="0 0 8 8"><path d="M4 0.7 V7.3 M0.7 4 H7.3 M1.7 1.7 L6.3 6.3 M6.3 1.7 L1.7 6.3" stroke="#5a5a5a" stroke-width="0.8"/></svg>
<svg style="position:absolute;left:580.1px;top:151.5px;" width="11" height="12" viewBox="0 0 11 12"><rect x="0.2" y="0.4" width="9" height="1.4" fill="#3e6d77"/><rect x="0.2" y="2.7" width="9" height="1.4" fill="#5d8690"/><rect x="0.2" y="5" width="9" height="1.4" fill="#93aeb3"/><path d="M3.6 10.3 L6.9 8" stroke="#2d8d98" stroke-width="1.8" stroke-linecap="round"/></svg>
<div style="position:absolute;left:161.60px;top:184px;font:normal 8.8px/1 'Liberation Sans', sans-serif;color:#222;white-space:pre;letter-spacing:0px;transform:scaleX(0.9406);transform-origin:0 0;-webkit-text-stroke:0.2px #222;">Éditeur :</div>
<div style="position:absolute;left:208.9px;top:180.4px;width:368.10px;height:15.20px;background:#fff;border:1px solid #a9a9a9;box-shadow:inset 1px 1px 0 #e6e6e6;box-sizing:border-box"></div>
<svg style="position:absolute;left:580.1px;top:182.8px;" width="11" height="12" viewBox="0 0 11 12"><rect x="0.2" y="0.4" width="9" height="1.4" fill="#3e6d77"/><rect x="0.2" y="2.7" width="9" height="1.4" fill="#5d8690"/><rect x="0.2" y="5" width="9" height="1.4" fill="#93aeb3"/><path d="M3.6 10.3 L6.9 8" stroke="#2d8d98" stroke-width="1.8" stroke-linecap="round"/></svg>
<div style="position:absolute;left:161.90px;top:202px;font:normal 8.8px/1 'Liberation Sans', sans-serif;color:#222;white-space:pre;letter-spacing:0px;transform:scaleX(0.8929);transform-origin:0 0;-webkit-text-stroke:0.2px #222;">Droits :</div>
<div style="position:absolute;left:208.9px;top:198.2px;width:368.10px;height:15.30px;background:#fff;border:1px solid #a9a9a9;box-shadow:inset 1px 1px 0 #e6e6e6;box-sizing:border-box"></div>
<svg style="position:absolute;left:0;top:0" width="620" height="470" viewBox="0 0 620 470"><g transform="translate(585.1 205.8) rotate(-45)"><path d="M-5.5 -2.6 H5.4 a2.6 2.6 0 0 1 0 5.2 H-5.5 a2.6 2.6 0 0 1 0 -5.2 Z" fill="none" stroke="#3a6f7a" stroke-width="1.3"/><path d="M5.2 0.9 H-3.6 a0.9 0.9 0 0 1 0 -1.8 H3.6" fill="none" stroke="#3a6f7a" stroke-width="1.1"/></g><path d="M591.5 205.9 Q597 200.3 602.6 205.9 Q597 211.5 591.5 205.9 Z" fill="#e2e2e2" stroke="#cfcfcf" stroke-width="0.9"/><circle cx="597" cy="205.9" r="2.1" fill="#c4c4c4"/><circle cx="597.4" cy="205.5" r="0.7" fill="#e6e6e6"/></svg>
<div style="position:absolute;left:161.90px;top:220px;font:normal 8.8px/1 'Liberation Sans', sans-serif;color:#222;white-space:pre;letter-spacing:0px;transform:scaleX(0.9094);transform-origin:0 0;-webkit-text-stroke:0.2px #222;">Source :</div>
<div style="position:absolute;left:208.9px;top:216px;width:368.10px;height:15.40px;background:#fff;border:1px solid #a9a9a9;box-shadow:inset 1px 1px 0 #e6e6e6;box-sizing:border-box"></div>
<div style="position:absolute;left:161.90px;top:238px;font:normal 8.8px/1 'Liberation Sans', sans-serif;color:#222;white-space:pre;letter-spacing:0px;transform:scaleX(0.9088);transform-origin:0 0;-webkit-text-stroke:0.2px #222;">Langue :</div>
<div style="position:absolute;left:209px;top:233.6px;width:125.20px;height:41.50px;background:#fff;border:1px solid #a9a9a9;box-shadow:inset 1px 1px 0 #e6e6e6;box-sizing:border-box"></div>
<div style="position:absolute;left:210px;top:234.6px;width:10.30px;height:12.20px;background:#ebebeb"></div>
<div style="position:absolute;left:210px;top:246.8px;width:123.20px;height:1.00px;background:#d8d8d8"></div>
<svg style="position:absolute;left:211px;top:236.8px;" width="8" height="8" viewBox="0 0 8 8"><path d="M4 0.7 V7.3 M0.7 4 H7.3 M1.7 1.7 L6.3 6.3 M6.3 1.7 L1.7 6.3" stroke="#5a5a5a" stroke-width="0.8"/></svg>
<svg style="position:absolute;left:337.6px;top:235.5px;" width="11" height="12" viewBox="0 0 11 12"><rect x="0.2" y="0.4" width="9" height="1.4" fill="#3e6d77"/><rect x="0.2" y="2.7" width="9" height="1.4" fill="#5d8690"/><rect x="0.2" y="5" width="9" height="1.4" fill="#93aeb3"/><path d="M3.6 10.3 L6.9 8" stroke="#2d8d98" stroke-width="1.8" stroke-linecap="round"/></svg>
<div style="position:absolute;left:352.90px;top:238px;font:normal 8.8px/1 'Liberation Sans', sans-serif;color:#222;white-space:pre;letter-spacing:0px;transform:scaleX(0.9052);transform-origin:0 0;-webkit-text-stroke:0.2px #222;">Lieu géographique :</div>
<div style="position:absolute;left:440.8px;top:233.6px;width:136.20px;height:27.80px;background:#fff;border:1px solid #a9a9a9;box-shadow:inset 1px 1px 0 #e6e6e6;box-sizing:border-box"></div>
<div style="position:absolute;left:441.8px;top:234.6px;width:10.20px;height:12.20px;background:#ebebeb"></div>
<div style="position:absolute;left:441.8px;top:246.8px;width:134.20px;height:1.00px;background:#d8d8d8"></div>
<svg style="position:absolute;left:442.5px;top:236.8px;" width="8" height="8" viewBox="0 0 8 8"><path d="M4 0.7 V7.3 M0.7 4 H7.3 M1.7 1.7 L6.3 6.3 M6.3 1.7 L1.7 6.3" stroke="#5a5a5a" stroke-width="0.8"/></svg>
<svg style="position:absolute;left:580.1px;top:235.5px;" width="11" height="12" viewBox="0 0 11 12"><rect x="0.2" y="0.4" width="9" height="1.4" fill="#3e6d77"/><rect x="0.2" y="2.7" width="9" height="1.4" fill="#5d8690"/><rect x="0.2" y="5" width="9" height="1.4" fill="#93aeb3"/><path d="M3.6 10.3 L6.9 8" stroke="#2d8d98" stroke-width="1.8" stroke-linecap="round"/></svg>
<div style="position:absolute;left:352.90px;top:268px;font:normal 8.8px/1 'Liberation Sans', sans-serif;color:#222;white-space:pre;letter-spacing:0px;transform:scaleX(0.9022);transform-origin:0 0;-webkit-text-stroke:0.2px #222;">Signification historique :</div>
<div style="position:absolute;left:440.8px;top:264.6px;width:136.20px;height:36.80px;background:#fff;border:1px solid #a9a9a9;box-shadow:inset 1px 1px 0 #e6e6e6;box-sizing:border-box"></div>
<div style="position:absolute;left:156.6px;top:306.4px;width:456.40px;height:13.40px;background:#5b5b5b"></div>
<div style="position:absolute;left:161.20px;top:309px;font:normal 8.6px/1 'Liberation Sans', sans-serif;color:#f2f2f2;white-space:pre;letter-spacing:0px;transform:scaleX(0.9226);transform-origin:0 0;-webkit-text-stroke:0.05px #f2f2f2;">Résumé narratif</div>
<div style="position:absolute;left:162.5px;top:322.5px;width:443.10px;height:37.20px;background:#fff;border:1px solid #a9a9a9;box-shadow:inset 1px 1px 0 #e6e6e6;box-sizing:border-box"></div>
<div style="position:absolute;left:592px;top:323.5px;width:12.60px;height:35.20px;background:#f0f0f0"></div>
<div style="position:absolute;left:593px;top:336.5px;width:11.00px;height:9.70px;background:#5a5a5a"></div>
<svg style="position:absolute;left:594px;top:326px;" width="9" height="7" viewBox="0 0 9 7"><path d="M1.5 5 L4.5 2 L7.5 5" stroke="#9a9a9a" stroke-width="1" fill="none"/></svg>
<svg style="position:absolute;left:594px;top:349px;" width="9" height="7" viewBox="0 0 9 7"><path d="M1.5 2 L4.5 5 L7.5 2" stroke="#9a9a9a" stroke-width="1" fill="none"/></svg>
<div style="position:absolute;left:1px;top:451.4px;width:617.00px;height:1.60px;background:#d9d9d9"></div>
<div style="position:absolute;left:1px;top:453px;width:617.00px;height:0.60px;background:#fafafa"></div>
<div style="position:absolute;left:1px;top:453.6px;width:617.00px;height:13.40px;background:#f1f1f1"></div>
<div style="position:absolute;left:5.70px;top:457px;font:normal 8.6px/1 'Liberation Sans', sans-serif;color:#2a2a2a;white-space:pre;letter-spacing:0px;transform:scaleX(0.9250);transform-origin:0 0;-webkit-text-stroke:0.2px #2a2a2a;">Affichage</div>
<div style="position:absolute;left:43px;top:455.5px;width:1.00px;height:10.50px;background:#d0d0d0"></div>
<div style="position:absolute;left:47.90px;top:457px;font:normal 8.6px/1 'Liberation Sans', sans-serif;color:#2a2a2a;white-space:pre;letter-spacing:0px;transform:scaleX(0.9459);transform-origin:0 0;-webkit-text-stroke:0.2px #2a2a2a;">Narration 1 de 1</div>
<div style="position:absolute;left:507px;top:455.5px;width:1.00px;height:10.50px;background:#d0d0d0"></div>
<div style="position:absolute;left:544.3px;top:455.5px;width:1.00px;height:10.50px;background:#d0d0d0"></div>
<div style="position:absolute;left:581.4px;top:455.5px;width:1.00px;height:10.50px;background:#d0d0d0"></div>
<div style="position:absolute;left:518.90px;top:457px;font:normal 8.6px/1 'Liberation Sans', sans-serif;color:#2a2a2a;white-space:pre;letter-spacing:0px;transform:scaleX(0.8882);transform-origin:0 0;-webkit-text-stroke:0.2px #2a2a2a;">emu</div>
<div style="position:absolute;left:552.50px;top:457px;font:normal 8.6px/1 'Liberation Sans', sans-serif;color:#2a2a2a;white-space:pre;letter-spacing:0px;transform:scaleX(0.8917);transform-origin:0 0;-webkit-text-stroke:0.2px #2a2a2a;">Admin</div>
<div style="position:absolute;left:589.60px;top:457px;font:normal 8.6px/1 'Liberation Sans', sans-serif;color:#2a2a2a;white-space:pre;letter-spacing:0px;transform:scaleX(0.9167);transform-origin:0 0;-webkit-text-stroke:0.2px #2a2a2a;">21042</div>
<div style="position:absolute;left:1px;top:109px;width:1.00px;height:359.00px;background:#fff"></div>
<div style="position:absolute;left:618px;top:41px;width:1.00px;height:427.00px;background:#fff"></div>
<div style="position:absolute;left:1px;top:467px;width:618.00px;height:1.00px;background:#fcfcfc"></div>
<div style="position:absolute;left:0px;top:469px;width:620.00px;height:1.00px;background:#ececec"></div>
<div style="position:absolute;left:0;top:0;width:620px;height:469px;box-sizing:border-box;border:1px solid #222"></div>
</body></html>
